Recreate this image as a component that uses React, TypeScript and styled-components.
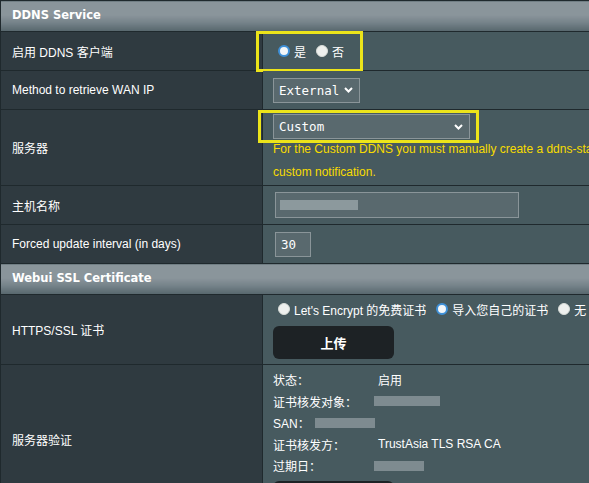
import React from "react";
import styled, {createGlobalStyle} from "styled-components";

const GlobalStyle = createGlobalStyle`
  html, body {
    margin: 0;
    padding: 0;
    background: #475a5f;
    overflow: hidden;
  }
  body {
    font-family: "Liberation Sans", Arial, "Noto Sans CJK SC", sans-serif;
    font-size: 12px;
    color: #ffffff;
  }
`

export default function App() {
  return <Page>
    <GlobalStyle />
    <FormTable>
      <colgroup>
        <col style={{width: 262}}/>
        <col/>
      </colgroup>
      <tbody>
        <tr>
          <Header colSpan={2}>DDNS Service</Header>
        </tr>
        <Row $h={39}>
          <Label>启用 DDNS 客户端</Label>
          <Value>
            <Highlight $w={107} $h={41} $top={-1} $left={-7}/>
            <RadioGroup>
              <Radio><Dot $checked/>是</Radio>
              <Radio><Dot/>否</Radio>
            </RadioGroup>
          </Value>
        </Row>
        <Row $h={39}>
          <Label>Method to retrieve WAN IP</Label>
          <Value>
            <Select $w={87}>External<Chevron/></Select>
          </Value>
        </Row>
        <Row $h={76}>
          <Label>服务器</Label>
          <Value $top>
            <Highlight $w={221} $h={33} $top={0} $left={-5}/>
            <Select $w={197}>Custom<Chevron/></Select>
            <Notice>For the Custom DDNS you must manually create a ddns-start script that updates your custom notification.</Notice>
          </Value>
        </Row>
        <Row $h={39}>
          <Label>主机名称</Label>
          <Value>
            <TextInput $w={244}>
              <Masked $w={78}/>
            </TextInput>
          </Value>
        </Row>
        <Row $h={39}>
          <Label>Forced update interval (in days)</Label>
          <Value>
            <NumberInput>30</NumberInput>
          </Value>
        </Row>
        <tr>
          <Header colSpan={2}>Webui SSL Certificate</Header>
        </tr>
        <Row $h={70}>
          <Label>HTTPS/SSL 证书</Label>
          <Value>
            <RadioGroup>
              <Radio><Dot/>Let's Encrypt 的免费证书</Radio>
              <Radio><Dot $checked/>导入您自己的证书</Radio>
              <Radio><Dot/>无</Radio>
            </RadioGroup>
            <Button>上传</Button>
          </Value>
        </Row>
        <Row $h={130}>
          <Label>服务器验证</Label>
          <Value $top>
            <InfoList>
              <InfoKey>状态：</InfoKey><span>启用</span>
              <InfoKey>证书核发对象：</InfoKey><Masked $w={66} $light $shift={-4}/>
              <InfoKey>SAN：</InfoKey><Masked $w={60} $light $shift={-63}/>
              <InfoKey>证书核发方：</InfoKey><span>TrustAsia TLS RSA CA</span>
              <InfoKey>过期日：</InfoKey><Masked $w={50} $light $shift={-4}/>
            </InfoList>
            <Button $cut/>
          </Value>
        </Row>
      </tbody>
    </FormTable>
  </Page>
}

const Page = styled.div`
  width: 760px;
`

const FormTable = styled.table`
  width: 760px;
  border-collapse: collapse;
  border-top: 1px solid #1f292d;
  table-layout: fixed;
`

const Header = styled.td`
  height: 28px;
  padding: 0 0 2px 11px;
  border: 1px solid #1f292d;
  background: linear-gradient(to bottom, #8a959b 0%, #8a959b 45%, #76838a 70%, #56666c 100%);
  font-family: "DejaVu Sans", Verdana, sans-serif;
  font-weight: bold;
  font-size: 11.5px;
  color: #ffffff;
  vertical-align: middle;
`

const Row = styled.tr<{$h: number}>`
  height: ${p => p.$h}px;
`

const Label = styled.th`
  padding: 0 0 0 11px;
  background: #2f3a40;
  border: 1px solid #1f292d;
  text-align: left;
  font-weight: normal;
  font-size: 12px;
  color: #ffffff;
  vertical-align: middle;
`

const Value = styled.td<{$top?: boolean}>`
  position: relative;
  padding: ${p => p.$top ? "4px 0 0 10px" : "0 0 0 10px"};
  background: #475a5f;
  border: 1px solid #1f292d;
  vertical-align: ${p => p.$top ? "top" : "middle"};
`

const Highlight = styled.div<{$w: number; $h: number; $top: number; $left: number}>`
  position: absolute;
  top: ${p => p.$top}px;
  left: ${p => p.$left}px;
  width: ${p => p.$w}px;
  height: ${p => p.$h}px;
  box-sizing: border-box;
  border: 3px solid #ece41a;
  pointer-events: none;
`

const RadioGroup = styled.div`
  display: flex;
  align-items: center;
  gap: 10px;
  padding-left: 5px;
`

const Radio = styled.label`
  display: flex;
  align-items: center;
  gap: 4px;
  font-size: 12px;
  color: #ffffff;
  white-space: nowrap;
`

const Dot = styled.span<{$checked?: boolean}>`
  flex: none;
  width: 12px;
  height: 12px;
  border-radius: 50%;
  box-sizing: border-box;
  background: ${p => p.$checked ? "#f3f6f8" : "#eef0ee"};
  border: ${p => p.$checked ? "2.5px solid #3e90d8" : "1px solid #d8dcd8"};
`

const Select = styled.div<{$w: number}>`
  width: ${p => p.$w}px;
  height: 25px;
  box-sizing: border-box;
  display: flex;
  align-items: center;
  justify-content: space-between;
  padding: 0 6px 0 5px;
  background: #59696e;
  border: 1px solid #8a9599;
  font-family: "DejaVu Sans Mono", "Liberation Mono", monospace;
  font-size: 12.5px;
  color: #ffffff;
`

function Chevron() {
  return <svg width="9" height="6" viewBox="0 0 9 6">
    <path d="M1 1 L4.5 4.5 L8 1" fill="none" stroke="#ffffff" strokeWidth="2"/>
  </svg>
}

const Notice = styled.div`
  margin-top: -1px;
  color: #f8dc00;
  font-size: 12px;
  line-height: 23px;
  width: 470px;
`

const TextInput = styled.div<{$w: number}>`
  width: ${p => p.$w}px;
  height: 26px;
  margin-left: 2px;
  box-sizing: border-box;
  display: flex;
  align-items: center;
  padding-left: 4px;
  background: #59696e;
  border: 1px solid #8a9599;
`

const Masked = styled.span<{$w: number; $light?: boolean; $shift?: number}>`
  display: inline-block;
  width: ${p => p.$w}px;
  height: 10px;
  margin-left: ${p => p.$shift ?? 0}px;
  background: ${p => p.$light ? "#7e8b90" : "#8c999d"};
  vertical-align: middle;
`

const NumberInput = styled.div`
  width: 36px;
  height: 25px;
  margin-left: 2px;
  box-sizing: border-box;
  display: flex;
  align-items: center;
  padding-left: 5px;
  background: #59696e;
  border: 1px solid #8a9599;
  font-family: "DejaVu Sans Mono", "Liberation Mono", monospace;
  font-size: 12.5px;
  color: #ffffff;
`

const Button = styled.div<{$cut?: boolean}>`
  width: 121px;
  height: 33px;
  margin-top: ${p => p.$cut ? 4 : 8}px;
  display: flex;
  align-items: center;
  justify-content: center;
  background: #1d2225;
  border-radius: 6px;
  font-weight: bold;
  font-size: 13px;
  color: #ffffff;
`

const InfoList = styled.div`
  display: grid;
  grid-template-columns: 105px 1fr;
  grid-auto-rows: 21.5px;
  align-items: center;
  font-size: 12px;
  color: #ffffff;
  justify-items: start;
`

const InfoKey = styled.span`
  white-space: nowrap;
`
